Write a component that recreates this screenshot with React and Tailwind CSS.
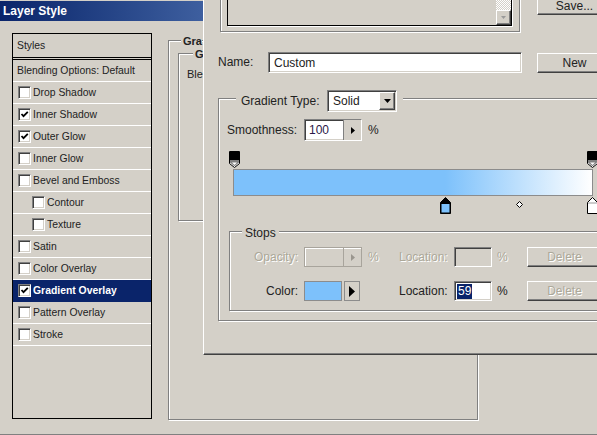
import React from "react";

// classic 3D borders
const raised =
  "border border-t-white border-l-white border-b-[#404040] border-r-[#404040] shadow-[inset_-1px_-1px_0_#808080]";
const sunken =
  "border border-t-[#808080] border-l-[#808080] border-b-white border-r-white shadow-[inset_1px_1px_0_#404040,inset_-1px_-1px_0_#d4d0c8]";
const etched = "border border-[#808080] shadow-[inset_1px_1px_0_#fff,1px_1px_0_#fff]";
const dim = "text-[#aca899] [text-shadow:1px_1px_0_#fff]";

const styles = [
  { label: "Drop Shadow" },
  { label: "Inner Shadow", checked: true },
  { label: "Outer Glow", checked: true },
  { label: "Inner Glow" },
  { label: "Bevel and Emboss" },
  { label: "Contour", indent: true },
  { label: "Texture", indent: true },
  { label: "Satin" },
  { label: "Color Overlay" },
  { label: "Gradient Overlay", checked: true, selected: true },
  { label: "Pattern Overlay" },
  { label: "Stroke" },
];

function CheckBox({ checked }) {
  return (
    <span className={`flex h-[13px] w-[13px] shrink-0 items-center justify-center bg-white ${sunken}`}>
      {checked && (
        <svg width="9" height="9" viewBox="0 0 9 9">
          <path d="M1.5 4L3.5 6.2L7.8 1.8" fill="none" stroke="#000" strokeWidth="1.8" />
        </svg>
      )}
    </span>
  );
}

function StylesList() {
  return (
    <div className="flex h-[386px] w-[140px] flex-col border border-black text-[10.4px] text-[#222]">
      <div className="flex h-[23px] items-center pl-[4px]">Styles</div>
      <div className="h-[3px] border-y border-black bg-[#d4d0c8]" />
      <div className="flex h-[22px] items-center border-b border-white pl-[4px]">Blending Options: Default</div>
      {styles.map((s) => (
        <div
          key={s.label}
          className={`flex h-[22px] items-center gap-[2px] border-b ${
            s.selected ? "border-[#0a246a] bg-[#0a246a] font-bold text-white" : "border-white"
          } ${s.indent ? "pl-[19px]" : "pl-[5px]"}`}
        >
          <CheckBox checked={s.checked} />
          <span>{s.label}</span>
        </div>
      ))}
    </div>
  );
}

function TriRight({ w = 4, h = 7, color = "#000" }) {
  return (
    <svg width={w} height={h} viewBox={`0 0 ${w} ${h}`}>
      <path d={`M0 0L${w} ${h / 2}L0 ${h}Z`} fill={color} />
    </svg>
  );
}

function OpacityStop() {
  return (
    <svg width="11" height="17" viewBox="0 0 11 17">
      <path d="M0.5 0.5H10.5V12.5L5.5 16.5L0.5 12.5Z" fill="#fff" stroke="#000" />
      <rect x="1" y="1" width="9" height="8" fill="#000" />
      <path d="M1 9H10V11.5L5.5 15.2L1 11.5Z" fill="#808080" />
      <path d="M3 11.5H8L5.5 14Z" fill="#fff" />
    </svg>
  );
}

function ColorStop({ selected, color }) {
  return (
    <svg width="11" height="17" viewBox="0 0 11 17">
      <path d="M5.5 0.5L10.5 5.5V16.5H0.5V5.5Z" fill={selected ? "#000" : "#fff"} stroke="#000" />
      {selected ? (
        <rect x="1.5" y="7" width="8" height="8.5" fill={color} />
      ) : (
        <path d="M1 6H10" stroke="#9a9a9a" />
      )}
    </svg>
  );
}

function Midpoint() {
  return (
    <svg width="7" height="7" viewBox="0 0 7 7">
      <path d="M3.5 0.5L6.5 3.5L3.5 6.5L0.5 3.5Z" fill="#fff" stroke="#000" />
    </svg>
  );
}

const opacityStops = [0, 100];
const colorStops = [
  { loc: 59, color: "#7dc1fb", selected: true },
  { loc: 100, color: "#ffffff" },
];
const stopLeft = (loc) => (loc / 100) * 358 - 4;

function GradientEditor() {
  return (
    <div className="absolute left-[203px] top-0 h-[355px] w-[420px] border-b border-l border-b-[#404040] border-l-white bg-[#d4d0c8] text-[12px] text-[#222] shadow-[inset_0_-1px_0_#808080]">
      {/* presets + save */}
      <div className="flex items-start">
        <div className={`-mt-[20px] ml-[16px] flex h-[52px] w-[300px] items-end pb-[5px] pl-[6px] ${etched}`}>
          <div className="flex h-[40px] w-[285px] justify-end border border-black shadow-[1px_1px_0_#fff]">
            <div className="flex w-[15px] flex-col">
              <div className="flex-1 bg-[repeating-conic-gradient(#fff_0%_25%,#d4d0c8_0%_50%)] bg-[length:2px_2px]" />
              <div className={`flex h-[15px] items-center justify-center bg-[#d4d0c8] ${raised}`}>
                <svg width="5" height="3" viewBox="0 0 5 3">
                  <path d="M0 0H5L2.5 3Z" fill="#9a9a9a" />
                </svg>
              </div>
            </div>
          </div>
        </div>
        <div className={`-mt-[8px] ml-[17px] flex h-[23px] w-[75px] items-end justify-center pb-[2px] leading-[12px] ${raised}`}>
          Save...
        </div>
      </div>

      {/* name */}
      <div className="mt-[20px] flex items-start">
        <span className="ml-[14px] w-[50px] leading-[21px]">Name:</span>
        <div className={`flex h-[21px] w-[254px] items-center bg-white pl-[5px] ${sunken}`}>Custom</div>
        <div className={`ml-[15px] mt-[1px] flex h-[20px] w-[75px] items-center justify-center ${raised}`}>New</div>
      </div>

      {/* gradient group */}
      <div className={`relative ml-[14px] mt-[25px] h-[223px] w-[420px] pl-[8px] pt-[20px] ${etched}`}>
        <div className="absolute -top-[9px] left-[17px] flex items-center bg-[#d4d0c8] pl-[5px] pr-[6px]">
          <span className="w-[86px]">Gradient Type:</span>
          <div className={`flex h-[22px] w-[70px] items-center justify-between bg-white pl-[5px] pr-[1px] ${sunken}`}>
            <span>Solid</span>
            <span className={`flex h-[18px] w-[16px] items-center justify-center bg-[#d4d0c8] ${raised}`}>
              <svg width="7" height="4" viewBox="0 0 7 4">
                <path d="M0 0H7L3.5 4Z" fill="#000" />
              </svg>
            </span>
          </div>
        </div>

        <div className="flex h-[22px] items-center">
          <span className="w-[77px]">Smoothness:</span>
          <div className={`flex h-[22px] w-[58px] bg-white ${sunken}`}>
            <span className="flex-1 pl-[4px] leading-[20px] text-[#2a1848]">100</span>
            <span className="flex w-[18px] items-center justify-center border-l border-[#808080] bg-[#d4d0c8]">
              <TriRight />
            </span>
          </div>
          <span className="ml-[6px]">%</span>
        </div>

        {/* gradient bar with stops */}
        <div className="ml-[6px] mt-[10px] w-[360px]">
          <div className="relative h-[18px]">
            {opacityStops.map((loc) => (
              <div key={loc} className="absolute top-0 flex" style={{ left: stopLeft(loc) }}>
                <OpacityStop />
              </div>
            ))}
          </div>
          <div className="h-[27px] border border-[#8c8c8c] bg-[linear-gradient(to_right,#7dc1fb_59%,#ffffff)]" />
          <div className="relative h-[18px]">
            {colorStops.map((s) => (
              <div key={s.loc} className="absolute top-[1px] flex" style={{ left: stopLeft(s.loc) }}>
                <ColorStop selected={s.selected} color={s.color} />
              </div>
            ))}
            <div className="absolute top-[5px] flex" style={{ left: stopLeft(79.5) + 2 }}>
              <Midpoint />
            </div>
          </div>
        </div>

        {/* stops group */}
        <div className={`relative ml-[2px] mt-[17px] h-[80px] w-[400px] pt-[15px] ${etched}`}>
          <span className="absolute -top-[8px] left-[12px] bg-[#d4d0c8] px-[3px]">Stops</span>

          <div className="flex h-[20px] items-center">
            <span className={`w-[68px] text-right ${dim}`}>Opacity:</span>
            <div className="ml-[6px] flex h-[20px] w-[58px] border border-[#a8a49c] shadow-[inset_1px_1px_0_#fff]">
              <span className="flex-1" />
              <span className="flex w-[18px] items-center justify-center border-l border-[#a8a49c]">
                <TriRight color="#9a968e" />
              </span>
            </div>
            <span className={`w-[37px] pl-[6px] ${dim}`}>%</span>
            <span className={`w-[55px] ${dim}`}>Location:</span>
            <div className={`h-[20px] w-[38px] ${sunken}`} />
            <span className={`w-[35px] pl-[5px] ${dim}`}>%</span>
            <div className={`flex h-[20px] w-[75px] items-center justify-center ${raised} ${dim}`}>Delete</div>
          </div>

          <div className="mt-[14px] flex h-[20px] items-center">
            <span className="w-[68px] text-right">Color:</span>
            <div className="ml-[6px] flex h-[20px] w-[58px] gap-[2px]">
              <span className="w-[38px] border border-[#8c8c8c] bg-[#7dc1fb]" />
              <span className="flex w-[16px] items-center justify-center border border-[#8c8c8c]">
                <TriRight w={6} h={11} />
              </span>
            </div>
            <span className="w-[37px]" />
            <span className="w-[55px]">Location:</span>
            <div className={`flex h-[20px] w-[38px] items-center bg-white pl-[2px] ${sunken}`}>
              <span className="bg-[#0a246a] px-[1px] leading-[15px] text-white">59</span>
            </div>
            <span className="w-[35px] pl-[5px]">%</span>
            <div className={`flex h-[20px] w-[75px] items-center justify-center ${raised} ${dim}`}>Delete</div>
          </div>
        </div>
      </div>
    </div>
  );
}

export default function App() {
  return (
    <div className="relative h-[435px] w-[597px] overflow-hidden bg-[#d4d0c8] font-['Liberation_Sans',Arial,sans-serif] text-[#222]">
      {/* Layer Style window (behind) */}
      <div className="flex h-[435px] flex-col border-b border-[#808080]">
        <div className="pt-[1px]">
          <div className="flex h-[20px] w-[203px] items-center bg-gradient-to-r from-[#0a246a] to-[#3e5f9f] pl-[3px] text-[12px] font-bold text-white">
            Layer Style
          </div>
        </div>
        <div className="flex pl-[12px] pt-[12px]">
          <StylesList />
          <div className={`relative ml-[16px] mt-[7px] h-[380px] w-[310px] ${etched}`}>
            {/* only the parts left of the editor window are visible */}
            <span className="absolute -top-[8px] left-[12px] bg-[#d4d0c8] pl-[2px] text-[11px] font-bold">Gra</span>
            <div className={`relative ml-[9px] mt-[12px] h-[168px] w-[290px] ${etched}`}>
              <span className="absolute -top-[8px] left-[14px] bg-[#d4d0c8] px-[2px] text-[11px] font-bold">G</span>
              <div className="pl-[8px] pt-[12px] text-[11px]">Bler</div>
            </div>
          </div>
        </div>
      </div>

      {/* Gradient Editor window (front) */}
      <GradientEditor />
    </div>
  );
}
